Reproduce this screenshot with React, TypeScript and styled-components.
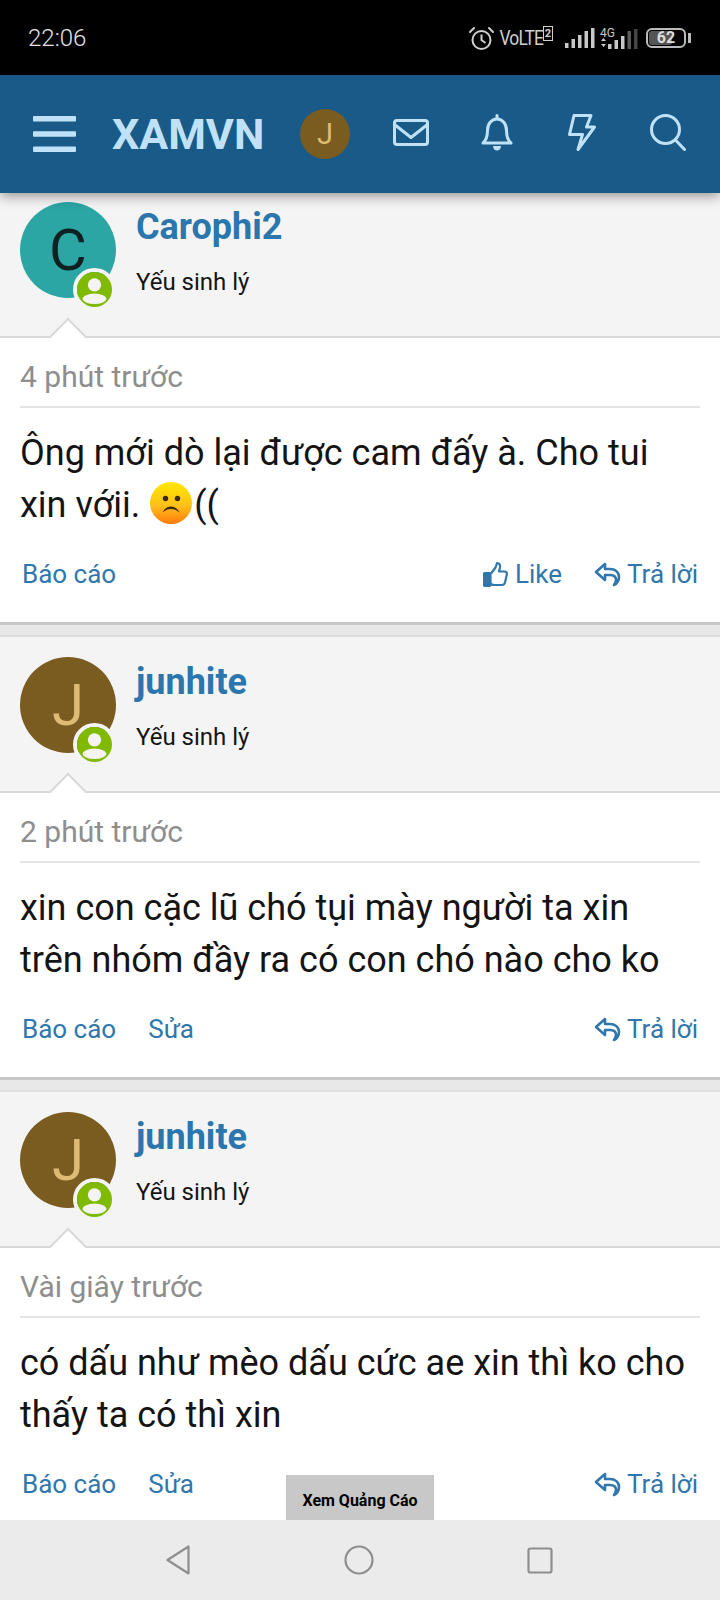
import React, { FC } from 'react';
import styled, { createGlobalStyle } from 'styled-components';

type PostData = {
  name: string;
  initial: string;
  avatarBg: string;
  avatarFg: string;
  time: string;
  lines: React.ReactNode;
  canLike?: boolean;
  canEdit?: boolean;
};

const BadFace: FC = () => (
  <FaceSvg viewBox="0 0 42 42" aria-hidden="true">
    <defs>
      <linearGradient id="face" x1="0" y1="0" x2="0" y2="1">
        <stop offset="0" stopColor="#ffe800" />
        <stop offset="0.55" stopColor="#ffc21a" />
        <stop offset="1" stopColor="#ff7a0c" />
      </linearGradient>
    </defs>
    <circle cx="21" cy="21" r="21" fill="url(#face)" />
    <circle cx="15.500" cy="16.500" r="2.700" fill="#3b2a10" />
    <circle cx="27.500" cy="16.500" r="2.700" fill="#3b2a10" />
    <path d="M12.500 30.500C15 26 18 24.500 21 24.500s6 1.500 8.500 6c-3-2.500-5.500-3.500-8.500-3.500s-5.500 1-8.500 3.500z" fill="#3b2a10" />
  </FaceSvg>
);

const POSTS: PostData[] = [
  {
    name: 'Carophi2',
    initial: 'C',
    avatarBg: '#2ca5a5',
    avatarFg: '#0d2121',
    time: '4 phút trước',
    lines: (
      <>
        Ông mới dò lại được cam đấy à. Cho tui
        <br />
        xin vớii. <BadFace />((
      </>
    ),
    canLike: true,
  },
  {
    name: 'junhite',
    initial: 'J',
    avatarBg: '#7a5b20',
    avatarFg: '#dcbb74',
    time: '2 phút trước',
    lines: (
      <>
        xin con cặc lũ chó tụi mày người ta xin
        <br />
        trên nhóm đầy ra có con chó nào cho ko
      </>
    ),
    canEdit: true,
  },
  {
    name: 'junhite',
    initial: 'J',
    avatarBg: '#7a5b20',
    avatarFg: '#dcbb74',
    time: 'Vài giây trước',
    lines: (
      <>
        có dấu như mèo dấu cức ae xin thì ko cho
        <br />
        thấy ta có thì xin
      </>
    ),
    canEdit: true,
  },
];

const StatusIcons: FC = () => (
  <StatusRight>
    <svg width="27" height="24" viewBox="0 0 27 24" fill="none" stroke="#cfcfcf" strokeWidth="2">
      <circle cx="13.500" cy="14" r="9" />
      <path d="M13.500 8.500V14l4 3" />
      <path d="M2 6l4-4M25 6l-4-4" strokeLinecap="round" />
    </svg>
    <VoLte>
      <VoLteText>VoLTE</VoLteText>
      <sup>2</sup>
    </VoLte>
    <svg width="30" height="20" viewBox="0 0 30 20" fill="#c8c8c8">
      <rect x="0" y="15" width="3.500" height="5" />
      <rect x="6.500" y="11" width="3.500" height="9" />
      <rect x="13" y="7" width="3.500" height="13" />
      <rect x="19.500" y="3" width="3.500" height="17" />
      <rect x="26" y="0" width="3.500" height="20" />
    </svg>
    <svg width="39" height="22" viewBox="0 0 39 22" fill="#c8c8c8">
      <text x="0" y="10" fontSize="12" fontFamily="Roboto, sans-serif">4G</text>
      <path d="M1 14l2.500-3 2.500 3zM1 17l2.500 3 2.500-3z" />
      <rect x="8" y="17" width="3.500" height="5" />
      <rect x="14.500" y="13" width="3.500" height="9" />
      <rect x="21" y="9" width="3.500" height="13" />
      <rect x="27.500" y="4" width="3.500" height="18" fill="#5c5c5c" />
      <rect x="34" y="2" width="3.500" height="20" fill="#444" />
    </svg>
    <Battery>
      <BatteryLevel />
      <BatteryValue>62</BatteryValue>
      <BatteryCap />
    </Battery>
  </StatusRight>
);

const Post: FC<{ post: PostData }> = ({ post }) => (
  <PostCard>
    <AuthorBlock>
      <AvatarWrap>
        <Avatar $bg={post.avatarBg} $fg={post.avatarFg}>
          {post.initial}
        </Avatar>
        <OnlineBadge>
          <svg width="35" height="35" viewBox="0 0 34 34">
            <circle cx="17" cy="17" r="17" fill="#7fba00" />
            <circle cx="17" cy="12.500" r="6.500" fill="#f4f4f4" />
            <ellipse cx="17" cy="26" rx="11.500" ry="5" fill="#f4f4f4" />
          </svg>
        </OnlineBadge>
      </AvatarWrap>
      <AuthorText>
        <AuthorName>{post.name}</AuthorName>
        <AuthorTitle>Yếu sinh lý</AuthorTitle>
      </AuthorText>
    </AuthorBlock>
    <PostBody>
      <Arrow />
      <TimeRow>{post.time}</TimeRow>
      <Message>{post.lines}</Message>
      <Actions>
        <ActionLink>Báo cáo</ActionLink>
        {post.canEdit && <ActionLink>Sửa</ActionLink>}
        <Spacer />
        {post.canLike && (
          <ActionLink>
            <svg width="26" height="27" viewBox="0 0 26 27" fill="none" stroke="#2f77ad" strokeWidth="2.200" strokeLinejoin="round">
              <path d="M8 12.500l4.500-6c.8-1.500 1-3 1.500-4.500 2.500 0 3.500 2 3 4.500l-1 4h5.500c2 0 2.800 1.500 2.300 3l-1.800 8c-.4 1.500-1.500 2.500-3 2.500H11c-1.500 0-3-1-3-1" />
              <rect x="1" y="12" width="6.500" height="13" rx="1" fill="#2f77ad" />
            </svg>
            Like
          </ActionLink>
        )}
        <ActionLink>
          <svg width="27" height="25" viewBox="0 0 27 25" fill="none" stroke="#2f77ad" strokeWidth="2.600" strokeLinejoin="round" strokeLinecap="round">
            <path d="M11 2L2 10l9 8v-5h5c4 0 6 2 6 5 0 2-1 3-2 5 3-1 5-5 5-8 0-5-4-8-9-8h-5z" />
          </svg>
          Trả lời
        </ActionLink>
      </Actions>
    </PostBody>
  </PostCard>
);

const App: FC = () => (
  <>
    <GlobalStyle />
    <Screen>
      <StatusBar>
        <Clock>22:06</Clock>
        <StatusIcons />
      </StatusBar>
      <Header>
        <svg width="43" height="36" viewBox="0 0 43 36" fill="#c0e2f8">
          <rect x="0" y="0" width="43" height="5.500" rx="1" />
          <rect x="0" y="15.250" width="43" height="5.500" rx="1" />
          <rect x="0" y="30.500" width="43" height="5.500" rx="1" />
        </svg>
        <Logo>XAMVN</Logo>
        <HeaderAvatar>J</HeaderAvatar>
        <HeaderIcons>
          <HeaderIcon>
            <svg width="36" height="27" viewBox="0 0 36 27" fill="none" stroke="#c0e2f8" strokeWidth="3" strokeLinejoin="round">
              <rect x="1.500" y="1.500" width="33" height="24" rx="2.500" />
              <path d="M1.500 5.500L18 18.500 34.500 5.500" />
            </svg>
          </HeaderIcon>
          <HeaderIcon>
            <svg width="32" height="37" viewBox="0 0 32 37" fill="none" stroke="#c0e2f8" strokeWidth="3" strokeLinejoin="round">
              <path d="M2 29c3.500-3 4.500-6 4.500-12.500C6.500 10 10.500 5 16 5s9.500 5 9.500 11.500c0 6.500 1 9.500 4.500 12.500z" />
              <path d="M16 1.500V4" strokeLinecap="round" />
              <path d="M12 32c0 6 8 6 8 0z" fill="#c0e2f8" stroke="none" />
            </svg>
          </HeaderIcon>
          <HeaderIcon>
            <svg width="28" height="37" viewBox="0 0 28 37" fill="none" stroke="#c0e2f8" strokeWidth="3" strokeLinejoin="round">
              <path d="M6 1.500h17l-4.500 11.500h8L10 35.500l4.500-15H1.500z" />
            </svg>
          </HeaderIcon>
          <HeaderIcon>
            <svg width="36" height="37" viewBox="0 0 36 37" fill="none" stroke="#c0e2f8" strokeWidth="3" strokeLinecap="round">
              <circle cx="15.500" cy="15.500" r="14" />
              <path d="M25.500 26L34.500 35.500" />
            </svg>
          </HeaderIcon>
        </HeaderIcons>
      </Header>
      <Feed>
        {POSTS.map((p, i) => (
          <Post key={i} post={p} />
        ))}
      </Feed>
      <AdTab>Xem Quảng Cáo</AdTab>
      <NavBar>
        <svg width="24" height="30" viewBox="0 0 24 30" fill="none" stroke="#8e8e8e" strokeWidth="2.200" strokeLinejoin="round">
          <path d="M22.500 1.500v27L1.500 15z" />
        </svg>
        <svg width="30" height="30" viewBox="0 0 30 30" fill="none" stroke="#8e8e8e" strokeWidth="2.200">
          <circle cx="15" cy="15" r="13.500" />
        </svg>
        <svg width="26" height="27" viewBox="0 0 26 27" fill="none" stroke="#8e8e8e" strokeWidth="2.200">
          <rect x="1.500" y="1.500" width="23" height="24" rx="2" />
        </svg>
      </NavBar>
    </Screen>
  </>
);

const GlobalStyle = createGlobalStyle`
  html, body {
    margin: 0;
    padding: 0;
    background: #fff;
    font-family: Roboto, "Noto Sans", sans-serif;
  }
`;

const Screen = styled.div`
  position: relative;
  width: 720px;
  height: 1600px;
  display: flex;
  flex-direction: column;
  overflow: hidden;
`;

const StatusBar = styled.div`
  height: 75px;
  flex: none;
  background: #000;
  display: flex;
  align-items: center;
  justify-content: space-between;
  padding: 0 30px 0 28px;
  color: #cfcfcf;
  position: relative;
  z-index: 3;
`;

const Clock = styled.span`
  font-size: 24px;
  font-weight: 300;
  color: #e4e4e4;
`;

const StatusRight = styled.div`
  display: flex;
  align-items: center;
  gap: 5px;
`;

const VoLte = styled.span`
  font-size: 20px;
  letter-spacing: -1px;
  margin: 0 8px 0 -7px;
  white-space: nowrap;
  sup {
    font-size: 11px;
    font-weight: 700;
    letter-spacing: 0;
    outline: 1px solid #cfcfcf;
    line-height: 11px;
    padding: 0 1px;
    margin-left: 1px;
    vertical-align: 8px;
  }
`;

const VoLteText = styled.span`
  display: inline-block;
  transform: scaleX(0.87);
  transform-origin: right center;
`;

const Battery = styled.div`
  position: relative;
  box-sizing: border-box;
  width: 40px;
  height: 20px;
  border: 2px solid #bbb;
  border-radius: 6px;
  margin: 0 4px 0 2px;
`;

const BatteryLevel = styled.div`
  position: absolute;
  inset: 1px 12px 1px 1px;
  background: #555;
  border-radius: 3px;
`;

const BatteryValue = styled.span`
  position: absolute;
  inset: 0;
  text-align: center;
  font-size: 16px;
  line-height: 16px;
  font-weight: 700;
  color: #ddd;
`;

const BatteryCap = styled.div`
  position: absolute;
  right: -7px;
  top: 3px;
  width: 3px;
  height: 10px;
  background: #bbb;
`;

const Header = styled.header`
  height: 118px;
  flex: none;
  background: #1a5a88;
  display: flex;
  align-items: center;
  padding: 0 0 0 33px;
  position: relative;
  z-index: 2;
  box-shadow: 0 3px 12px rgba(0, 0, 0, 0.4);
`;

const Logo = styled.div`
  font-size: 43px;
  font-weight: 700;
  color: #c0e2f8;
  margin-left: 36px;
  width: 188px;
`;

const HeaderAvatar = styled.div`
  width: 50px;
  height: 50px;
  border-radius: 50%;
  background: #7a5b20;
  color: #dcbb74;
  display: flex;
  align-items: center;
  justify-content: center;
  font-size: 29px;
  flex: none;
`;

const HeaderIcons = styled.div`
  display: flex;
  gap: 47.5px;
  margin-left: 42px;
  padding-bottom: 3px;
`;

const HeaderIcon = styled.div`
  width: 38px;
  display: flex;
  align-items: center;
  justify-content: center;
`;

const Feed = styled.main`
  flex: 1;
  min-height: 0;
  overflow: hidden;
  margin-top: -11px;
  background: #e8e8e8;
`;

const PostCard = styled.article`
  background: #fff;
  border-bottom: 3px solid #c8c8c8;
  margin-bottom: 12px;
  box-shadow: 0 -2px 0 #dfdfdf;
`;

const AuthorBlock = styled.div`
  height: 156px;
  background: #f4f4f4;
  border-bottom: 2px solid #d8d8d8;
  padding: 20px 20px 0;
  box-sizing: border-box;
  display: flex;
`;

const AvatarWrap = styled.div`
  position: relative;
  width: 96px;
  height: 96px;
  flex: none;
`;

const Avatar = styled.div<{ $bg: string; $fg: string }>`
  width: 96px;
  height: 96px;
  border-radius: 50%;
  background: ${(p) => p.$bg};
  color: ${(p) => p.$fg};
  display: flex;
  align-items: center;
  justify-content: center;
  font-size: 58px;
`;

const OnlineBadge = styled.div`
  position: absolute;
  left: 53px;
  top: 66px;
  width: 35px;
  height: 35px;
  border: 4px solid #f4f4f4;
  border-radius: 50%;
  display: flex;
`;

const AuthorText = styled.div`
  margin-left: 20px;
`;

const AuthorName = styled.div`
  color: #2a76ad;
  font-size: 36px;
  font-weight: 700;
  line-height: 40px;
  margin-top: 5px;
`;

const AuthorTitle = styled.div`
  color: #141414;
  font-size: 24px;
  line-height: 30px;
  margin-top: 20px;
`;

const PostBody = styled.div`
  position: relative;
  padding: 0 20px;
  height: 284px;
  display: flex;
  flex-direction: column;
`;

const Arrow = styled.div`
  position: absolute;
  left: 55px;
  top: -15px;
  width: 24px;
  height: 24px;
  background: #fff;
  border-top: 2px solid #d8d8d8;
  border-left: 2px solid #d8d8d8;
  transform: rotate(45deg);
`;

const TimeRow = styled.div`
  position: relative;
  color: #8e8e8e;
  font-size: 30px;
  line-height: 33px;
  padding: 22px 0 13px;
  border-bottom: 2px solid #e4e4e4;
`;

const Message = styled.div`
  color: #141414;
  font-size: 36px;
  line-height: 52px;
  margin-top: 19px;
  white-space: nowrap;
`;

const FaceSvg = styled.svg`
  width: 42px;
  height: 42px;
  vertical-align: -7px;
  margin: 0 2px 0 1px;
`;

const Actions = styled.div`
  margin-top: auto;
  display: flex;
  align-items: center;
  gap: 32px;
  padding: 0 2px 32px;
`;

const ActionLink = styled.span`
  display: inline-flex;
  align-items: center;
  gap: 6px;
  color: #2f77ad;
  font-size: 26px;
  line-height: 32px;
`;

const Spacer = styled.div`
  flex: 1;
`;

const AdTab = styled.div`
  position: absolute;
  left: 286px;
  top: 1475px;
  width: 148px;
  height: 45px;
  background: #c8c8c8;
  color: #000;
  font-size: 16px;
  font-weight: 700;
  display: flex;
  align-items: center;
  justify-content: center;
  padding-top: 5px;
  box-sizing: border-box;
`;

const NavBar = styled.nav`
  height: 80px;
  flex: none;
  background: #ebebeb;
  display: flex;
  align-items: center;
  gap: 153.5px;
  padding: 0 0 0 166px;
  position: relative;
  z-index: 2;
`;

export default App;
